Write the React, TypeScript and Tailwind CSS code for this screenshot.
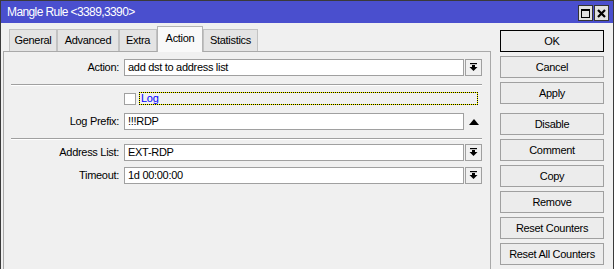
import React from 'react';

const font = { fontFamily: '"Liberation Sans", Arial, sans-serif' };

const DropArrow = () => (
    <svg width="9" height="9" viewBox="0 0 9 9">
        <rect x="1" y="0" width="7" height="1.2" fill="#000" />
        <rect x="3" y="2" width="3" height="2" fill="#000" />
        <polygon points="0.5,4 8.5,4 4.5,8" fill="#000" />
    </svg>
);

const DropButton = () => (
    <div className="ml-[1px] w-[17px] h-[17px] border border-[#a0a0a0] bg-[#f0f0f0] flex items-center justify-center">
        <DropArrow />
    </div>
);

const Field = ({ label, value, drop = true, up = false }: { label: string; value: string; drop?: boolean; up?: boolean }) => (
    <div className="flex items-center h-[17px]">
        <div className="w-[120px] pr-[5px] text-right text-black">{label}</div>
        <div className="w-[340px] h-[17px] border border-[#a0a0a0] bg-white pl-[3px] leading-[15px] text-black">{value}</div>
        {drop && <DropButton />}
        {up && (
            <div className="ml-[1px] w-[17px] h-[17px] flex items-center justify-center">
                <svg width="10" height="6" viewBox="0 0 10 6">
                    <polygon points="0,6 10,6 5,0" fill="#000" />
                </svg>
            </div>
        )}
    </div>
);

const Separator = () => (
    <div className="ml-[7px] w-[471px] h-[2px] flex flex-col">
        <div className="h-[1px] bg-[#a0a0a0]" />
        <div className="h-[1px] bg-white" />
    </div>
);

const tabs = [
    { name: 'General', w: 'w-[48px]' },
    { name: 'Advanced', w: 'w-[62px]' },
    { name: 'Extra', w: 'w-[38px]' },
    { name: 'Action', w: 'w-[46px]', active: true },
    { name: 'Statistics', w: 'w-[55px]' },
];

const buttons = ['OK', 'Cancel', 'Apply', 'Disable', 'Comment', 'Copy', 'Remove', 'Reset Counters', 'Reset All Counters'];

export default function App() {
    return (
        <div className="w-[614px] h-[269px] flex flex-col overflow-hidden text-[11px] tracking-[-0.3px] border-x border-t border-[#3a3a3a]" style={font}>
            {/* title bar */}
            <div className="h-[22px] bg-[#4a4fce] flex items-center justify-between pl-[6px] pr-[4px]">
                <span className="text-white text-[12px] tracking-[-0.6px]">Mangle Rule &lt;3389,3390&gt;</span>
                <div className="flex gap-[1px] mt-[2px]">
                    <div className="w-[15px] h-[16px] bg-[#e0e0e0] border border-[#333] flex items-center justify-center">
                        <div className="w-[9px] h-[9px] border border-black border-t-2" />
                    </div>
                    <div className="w-[15px] h-[16px] bg-[#e0e0e0] border border-[#333] flex items-center justify-center">
                        <svg width="9" height="9" viewBox="0 0 9 9">
                            <path d="M1 1 L8 8 M8 1 L1 8" stroke="#000" strokeWidth="2.2" />
                        </svg>
                    </div>
                </div>
            </div>

            {/* body */}
            <div className="flex-1 flex bg-[#f0f0f0]">
                <div className="ml-[2px] w-[488px] flex flex-col">
                    {/* tabs */}
                    <div className="h-[28px] flex items-end pl-[6px]">
                        {tabs.map((t) =>
                            t.active ? (
                                <div key={t.name} className={`${t.w} h-[26px] -mb-[1px] z-10 bg-[#f9f9f9] border-x border-t border-[#b4b4b4] flex items-center justify-center pb-[2px] text-black`}>
                                    {t.name}
                                </div>
                            ) : (
                                <div key={t.name} className={`${t.w} h-[22px] bg-[#e4e4e4] border border-b-0 border-[#c2c2c2] flex items-center justify-center text-black`}>
                                    {t.name}
                                </div>
                            )
                        )}
                    </div>

                    {/* panel */}
                    <div className="flex-1 border-l border-t border-r border-[#a9a9a9] bg-[#f0f0f0] flex flex-col">
                        <div className="mt-[7px]">
                            <Field label="Action:" value="add dst to address list" />
                        </div>
                        <div className="mt-[8px]">
                            <Separator />
                        </div>
                        <div className="mt-[6px] h-[13px] flex items-center">
                            <div className="ml-[120px] w-[12px] h-[12px] border border-[#a0a0a0] bg-white" />
                            <div className="ml-[3px] w-[339px] h-[13px] border border-dotted border-black bg-[#ffff00]">
                                <div className="h-full bg-[#f0f0f0] pl-[1px] leading-[11px] text-[#0000ff]">Log</div>
                            </div>
                        </div>
                        <div className="mt-[8px]">
                            <Field label="Log Prefix:" value="!!!RDP" drop={false} up />
                        </div>
                        <div className="mt-[8px]">
                            <Separator />
                        </div>
                        <div className="mt-[4px]">
                            <Field label="Address List:" value="EXT-RDP" />
                        </div>
                        <div className="mt-[6px]">
                            <Field label="Timeout:" value="1d 00:00:00" />
                        </div>
                    </div>
                </div>

                {/* buttons */}
                <div className="flex flex-col pl-[9px] pt-[7px]">
                    {buttons.map((b, i) => (
                        <div
                            key={b}
                            className={`w-[104px] h-[22px] flex items-center justify-center text-black text-[11px] ${i === 0 ? 'border border-black bg-[#ececec]' : 'border border-[#a0a0a0] bg-[#ececec]'} ${i === 0 ? '' : i === 3 ? 'mt-[9px]' : 'mt-[4px]'}`}
                        >
                            {b}
                        </div>
                    ))}
                </div>
            </div>
        </div>
    );
}
